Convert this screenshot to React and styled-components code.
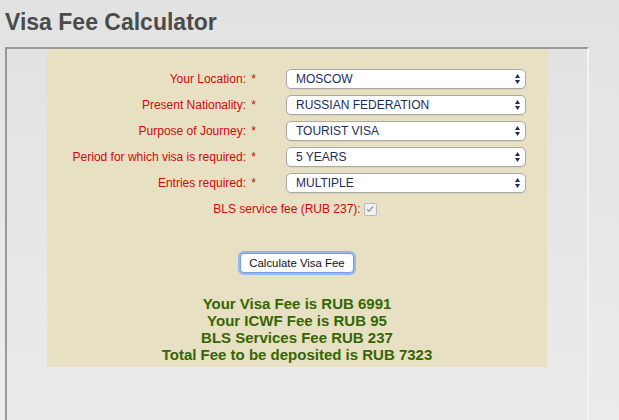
import React from "react"
import styled, { createGlobalStyle } from "styled-components"

const GlobalStyle = createGlobalStyle`
  html, body {
    margin: 0;
    padding: 0;
    height: 100%;
    overflow: hidden;
  }
  body {
    background: linear-gradient(#e2e2e2, #ececec);
    font-family: "Liberation Sans", Arial, sans-serif;
  }
`

const fields = [
  { label: "Your Location:", value: "MOSCOW" },
  { label: "Present Nationality:", value: "RUSSIAN FEDERATION" },
  { label: "Purpose of Journey:", value: "TOURIST VISA" },
  { label: "Period for which visa is required:", value: "5 YEARS" },
  { label: "Entries required:", value: "MULTIPLE" },
]

const results = [
  "Your Visa Fee is RUB 6991",
  "Your ICWF Fee is RUB 95",
  "BLS Services Fee RUB 237",
  "Total Fee to be deposited is RUB 7323",
]

const Arrows = () => (
  <svg width="5" height="10" viewBox="0 0 5 10">
    <polygon points="2.5,0 5,4 0,4" fill="#1b2c5e" />
    <polygon points="0,6 5,6 2.5,10" fill="#1b2c5e" />
  </svg>
)

const Check = () => (
  <svg width="8" height="8" viewBox="0 0 8 8">
    <path d="M1 4.2 L3.1 6.3 L7 1.5" fill="none" stroke="#9a9a9a" strokeWidth="1.3" />
  </svg>
)

const App = () => (
  <>
    <GlobalStyle />
    <Page>
      <Title>Visa Fee Calculator</Title>
      <Frame>
        <Panel>
          <Form>
            {fields.map(({ label, value }) => (
              <React.Fragment key={label}>
                <Label>
                  {label} <span>*</span>
                </Label>
                <SelectBox>
                  <Select defaultValue={value}>
                    <option>{value}</option>
                  </Select>
                  <ArrowSlot>
                    <Arrows />
                  </ArrowSlot>
                </SelectBox>
              </React.Fragment>
            ))}
          </Form>

          <FeeRow>
            BLS service fee (RUB 237):
            <CheckBox>
              <Check />
            </CheckBox>
          </FeeRow>

          <ButtonRow>
            <Button type="button">Calculate Visa Fee</Button>
          </ButtonRow>

          <Results>
            {results.map(r => (
              <div key={r}>{r}</div>
            ))}
          </Results>
        </Panel>
      </Frame>
    </Page>
  </>
)

export default App

const Page = styled.div`
  padding: 0 0 0 5px;
  width: 584px;
`

const Title = styled.h1`
  margin: 0;
  padding-top: 9px;
  height: 38px;
  font-size: 23px;
  font-weight: bold;
  color: #4b4b4b;
`

const Frame = styled.div`
  border-top: 2px solid #999999;
  border-left: 2px solid #999999;
  border-right: 2px solid #f3f3f3;
  height: 371px;
  padding: 0 39px 0 40px;
  background: linear-gradient(#e2e2e2, #ebebeb);
`

const Panel = styled.div`
  background: #e8e0c2;
  width: 500px;
  padding: 20px 0 4px;
  box-sizing: border-box;
`

const Form = styled.div`
  display: grid;
  grid-template-columns: 209px 240px;
  column-gap: 30px;
  row-gap: 6px;
`

const Label = styled.div`
  display: flex;
  align-items: center;
  justify-content: flex-end;
  font-size: 12px;
  color: #cc0a0a;
  white-space: pre;

  span {
    margin-left: 2px;
  }
`

const SelectBox = styled.div`
  position: relative;
  height: 20px;
`

const Select = styled.select`
  appearance: none;
  -webkit-appearance: none;
  width: 100%;
  height: 20px;
  box-sizing: border-box;
  margin: 0;
  padding: 0 0 0 9px;
  border: 1px solid #a8a8a8;
  border-radius: 5px;
  background: #ffffff;
  box-shadow: 0 1px 1px rgba(0, 0, 0, 0.06);
  font-family: "Liberation Sans", Arial, sans-serif;
  font-size: 12px;
  color: #1b2c5e;
  outline: none;
`

const ArrowSlot = styled.div`
  position: absolute;
  right: 6px;
  top: 5px;
  display: flex;
  pointer-events: none;
`

const FeeRow = styled.div`
  display: flex;
  align-items: center;
  justify-content: center;
  gap: 3px;
  margin-top: 9px;
  padding-right: 4px;
  height: 14px;
  font-size: 12px;
  color: #cc0a0a;
`

const CheckBox = styled.span`
  display: inline-flex;
  align-items: center;
  justify-content: center;
  width: 11px;
  height: 11px;
  border: 1px solid #b9b9b9;
  border-radius: 2px;
  background: #f1f1f1;
`

const ButtonRow = styled.div`
  display: flex;
  justify-content: center;
  margin-top: 37px;
`

const Button = styled.button`
  height: 20px;
  width: 114px;
  padding: 0;
  border: 1px solid #7a9fd6;
  border-radius: 4px;
  background: #ffffff;
  box-shadow: 0 0 0 2px #92b8ef;
  font-family: "Liberation Sans", Arial, sans-serif;
  font-size: 11.4px;
  color: #111111;
`

const Results = styled.div`
  margin-top: 22px;
  text-align: center;
  font-size: 15px;
  font-weight: bold;
  line-height: 17px;
  color: #356604;
`
